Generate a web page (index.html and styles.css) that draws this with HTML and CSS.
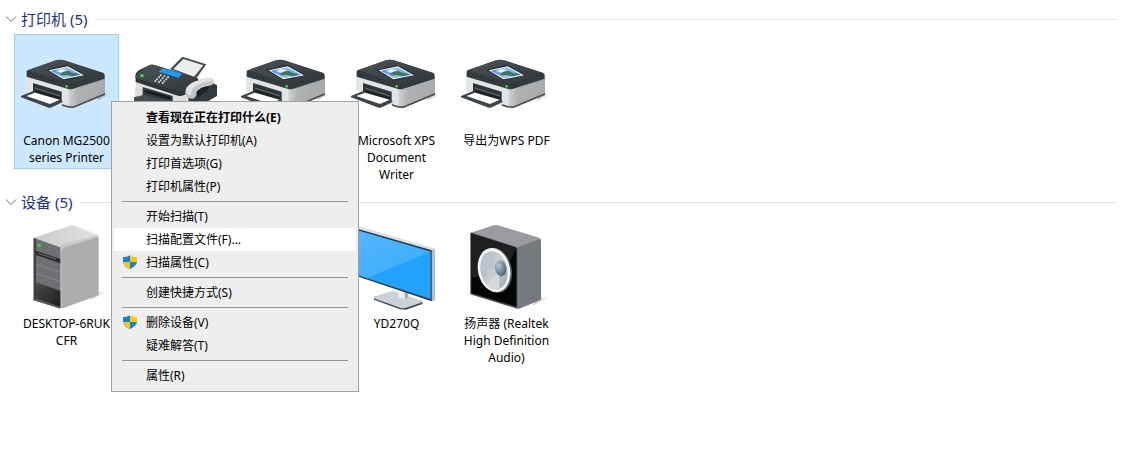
FILE: index.html
```
<!DOCTYPE html>
<html lang="zh-CN">
<head>
    <meta charset="UTF-8">
    <title>设备和打印机</title>
    <link rel="stylesheet" href="styles.css">
</head>
<body>
    <!-- shared icons -->
    <svg class="defs" aria-hidden="true">
        <defs>
            <linearGradient id="side" x1="0" x2="1">
                <stop offset="0" stop-color="#cfd0d1"/>
                <stop offset=".25" stop-color="#b0b1b3"/>
                <stop offset="1" stop-color="#a8a9ab"/>
            </linearGradient>
            <linearGradient id="lid" x1="0" y1="0" x2="1" y2="1">
                <stop offset="0" stop-color="#4a5358"/>
                <stop offset="1" stop-color="#31383c"/>
            </linearGradient>
            <linearGradient id="sky" x1="0" y1="0" x2="1" y2="0">
                <stop offset="0" stop-color="#3f82e6"/>
                <stop offset=".4" stop-color="#8fc2f7"/>
                <stop offset="1" stop-color="#5c9fe0"/>
            </linearGradient>
            <linearGradient id="shadow" x1="0" x2="1">
                <stop offset="0" stop-color="#000" stop-opacity=".22"/>
                <stop offset="1" stop-color="#000" stop-opacity="0"/>
            </linearGradient>
        </defs>
        <symbol id="printer" viewBox="45 105 309 288">
            <path d="M300 278L332 281L316 291L290 302Z" fill="url(#shadow)"/>
            <path d="M78 222L212 262V322L196 322L78 272Z" fill="#e3e4e6"/>
            <path d="M210 262L315 232V282L226 322Q216 325 206 322V264Z" fill="url(#side)"/>
            <path d="M315 279V285L222 323Q208 326 186 317V312Q208 321 222 318Z" fill="#4b5155"/>
            <path d="M99 249L185 275V305L99 278Z" fill="#30373b"/>
            <path d="M105 260L180 283V302L105 279Z" fill="#1d2225"/>
            <path d="M105 262L180 285V290L105 267Z" fill="#596165"/>
            <path d="M63 288L98 274L187 302V307L152 323H146L63 292Z" fill="#3d4549"/>
            <path d="M79 288L105 278L179 299L150 312Z" fill="#fff"/>
            <path d="M80 212L168 181Q180 177 192 181L310 219Q314 221 314 226V236L220 266Q211 269 202 266L80 230Z" fill="#333a3e"/>
            <path d="M84 210L169 181Q180 178 191 181L309 219L220 249Q211 252 202 249Z" fill="url(#lid)"/>
            <path d="M138 209L200 194L258 225L192 242Z" fill="#272d31"/>
            <path d="M146 211L203 199L252 226L190 238Z" fill="#fff"/>
            <path d="M152 212L201 202L245 225L190 234Z" fill="url(#sky)"/>
            <path d="M168 213L184 207L200 210L186 218Z" fill="#e4f2fd"/>
            <path d="M178 222Q192 212 206 213Q220 222 240 222L226 227L196 231Z" fill="#45705a"/>
            <path d="M180 228L196 225L224 229L190 234Z" fill="#8fc0e6"/>
            <circle cx="200" cy="259" r="4" fill="#2fe63a"/>
        </symbol>
    </svg>

    <section class="group">
        <header class="group-header">
            <button class="toggle" type="button" aria-label="折叠打印机">
                <svg class="chevron" viewBox="0 0 12 8"><path d="M1 1.500L6 6.500L11 1.500"/></svg>
            </button>
            <h2>打印机 (5)</h2>
        </header>
        <ul class="tiles">
            <li class="tile selected">
                <svg class="icon"><use href="#printer"/></svg>
                <span class="name">Canon MG2500 series Printer</span>
            </li>
            <li class="tile">
                <svg class="icon" viewBox="375 105 309 288">
                    <path d="M547 170L619 193L588 236L510 208Z" fill="#444c50"/>
                    <path d="M550 177L610 196L582 230L520 207Z" fill="#eceded"/>
                    <path d="M408 238L540 280L562 292V318H402Z" fill="#dddee0"/>
                    <path d="M428 261L518 288V312L402 302V294L428 290Z" fill="#31383c"/>
                    <path d="M434 269L512 291V299L434 277Z" fill="#171b1e"/>
                    <path d="M402 292L430 285L512 302L490 315H430L402 304Z" fill="#464e52"/>
                    <path d="M406 226Q408 214 424 207L449 195Q456 192 464 195L590 234Q598 237 594 243L560 280Q552 291 534 287L407 246Z" fill="#2e3539"/>
                    <path d="M410 222L449 196Q456 193 464 196L590 236L553 270Q545 277 532 273L408 235Z" fill="url(#lid)"/>
                    <path d="M488 205L547 221L535 233L476 215Z" fill="#1b9cf2"/>
                    <g fill="#d9dcde">
                        <circle cx="482" cy="226" r="3"/><circle cx="493" cy="229" r="3"/><circle cx="504" cy="232" r="3"/>
                        <circle cx="477" cy="232" r="3"/><circle cx="488" cy="235" r="3"/><circle cx="499" cy="238" r="3"/>
                        <circle cx="471" cy="238" r="3"/><circle cx="482" cy="241" r="3"/><circle cx="493" cy="244" r="3"/>
                        <circle cx="466" cy="243" r="3"/><circle cx="477" cy="246" r="3"/><circle cx="488" cy="249" r="3"/>
                    </g>
                    <circle cx="426" cy="227" r="5" fill="#35e33b"/>
                    <path d="M565 290L640 250L651 256V288L610 312H565Z" fill="#343b3f"/>
                    <path d="M588 276Q602 258 630 257L620 274L594 291Z" fill="#1d2225"/>
                    <path d="M556 276Q556 258 580 246Q606 234 632 235Q642 238 641 250Q638 258 627 256Q600 258 589 274Q592 290 580 296Q564 297 556 287Z" fill="#c3c4c6"/>
                    <path d="M557 274Q560 257 584 245Q608 235 631 236L637 243Q600 246 581 262Q573 270 574 285Q562 284 557 274Z" fill="#e5e5e6"/>
                </svg>
            </li>
            <li class="tile">
                <svg class="icon"><use href="#printer"/></svg>
            </li>
            <li class="tile">
                <svg class="icon"><use href="#printer"/></svg>
                <span class="name">Microsoft XPS Document Writer</span>
            </li>
            <li class="tile">
                <svg class="icon"><use href="#printer"/></svg>
                <span class="name">导出为WPS PDF</span>
            </li>
        </ul>
    </section>

    <section class="group">
        <header class="group-header">
            <button class="toggle" type="button" aria-label="折叠设备">
                <svg class="chevron" viewBox="0 0 12 8"><path d="M1 1.500L6 6.500L11 1.500"/></svg>
            </button>
            <h2>设备 (5)</h2>
        </header>
        <ul class="tiles">
            <li class="tile">
                <!-- tower -->
                <svg class="icon" viewBox="45 99 309 288">
                    <defs>
                        <linearGradient id="towerTop" x1="0" x2="1">
                            <stop offset="0" stop-color="#c9cacc"/>
                            <stop offset="1" stop-color="#e2e3e5"/>
                        </linearGradient>
                        <linearGradient id="towerBase" x1="0" y1="0" x2="1" y2="1">
                            <stop offset="0" stop-color="#4b4b4d"/>
                            <stop offset="1" stop-color="#1c1c1d"/>
                        </linearGradient>
                    </defs>
                    <path d="M290 318L320 323L296 332L270 345Z" fill="url(#shadow)"/>
                    <path d="M102 158L210 122Q217 119 224 122L290 148Q295 150 292 155L183 188Z" fill="url(#towerTop)"/>
                    <path d="M180 192Q182 182 194 178L288 152Q296 150 296 160V331L188 370L180 368Z" fill="#acadaf"/>
                    <path d="M180 192Q182 182 194 178L288 152Q294 151 295 156L196 186Q186 190 184 200V369L180 368Z" fill="#c9cacc"/>
                    <path d="M101 158L181 187V370L101 345Z" fill="#707074"/>
                    <path d="M101 158L108 161V347L101 344Z" fill="#414144"/>
                    <path d="M108 197L181 222V235L108 210Z" fill="#2a2a2c"/>
                    <path d="M114 205L168 222" stroke="#6d6d70" stroke-width="3"/>
                    <path d="M108 238L181 262M108 265L181 289" stroke="#929296" stroke-width="2"/>
                    <path d="M108 292L181 317V366L108 341Z" fill="url(#towerBase)"/>
                    <path d="M101 341L181 366V371L101 346Z" fill="#55565a"/>
                    <circle cx="118" cy="181" r="5" fill="#24e62c"/>
                </svg>
                <span class="name hostname">DESKTOP-6RUKCFR</span>
            </li>
            <li class="tile"></li>
            <li class="tile"></li>
            <li class="tile">
                <!-- monitor -->
                <svg class="icon" viewBox="-15 9 309 288">
                    <defs>
                        <linearGradient id="screen" x1="0" y1="0" x2="1" y2="1">
                            <stop offset="0" stop-color="#55b7fd"/>
                            <stop offset="1" stop-color="#3aacfd"/>
                        </linearGradient>
                    </defs>
                    <path d="M72 246L126 230L217 259V267L168 284L150 283L72 254Z" fill="#3d484f"/>
                    <path d="M72 246L124 229Q130 228 136 230L215 257Q219 260 213 263L168 278Q158 281 150 278L75 251Q70 249 72 246Z" fill="#cbd2d7"/>
                    <path d="M145 220L175 230V250L164 253L145 246Z" fill="#eceff1"/>
                    <path d="M164 228H175V249L164 253Z" fill="#a7afb5"/>
                    <path d="M-10 24L0 27L255 102V256L245 259Z" fill="#b5bec4"/>
                    <path d="M-10 25L0 27L254 102L245 106L-10 32Z" fill="#dae0e3"/>
                    <path d="M-10 32L245 106V259L-10 173Z" fill="#263742"/>
                    <path d="M-10 37L242 110V252L-10 170Z" fill="#22a2fd"/>
                    <path d="M-10 37L242 110L52 188L-10 168Z" fill="url(#screen)"/>
                </svg>
                <span class="name">YD270Q</span>
            </li>
            <li class="tile">
                <!-- speaker -->
                <svg class="icon" viewBox="315 9 309 288">
                    <defs>
                        <linearGradient id="cone" x1="0" y1="0" x2="1" y2="1">
                            <stop offset="0" stop-color="#a5adb2"/>
                            <stop offset=".5" stop-color="#c9d0d4"/>
                            <stop offset="1" stop-color="#98a1a7"/>
                        </linearGradient>
                        <radialGradient id="dome" cx=".35" cy=".3" r=".8">
                            <stop offset="0" stop-color="#b6c7d2"/>
                            <stop offset="1" stop-color="#465968"/>
                        </radialGradient>
                    </defs>
                    <path d="M566 244L598 250L572 260L545 274Z" fill="url(#shadow)"/>
                    <path d="M361 54L430 31Q437 29 444 31L568 68Q573 70 571 76L502 100Z" fill="#9a9ca1"/>
                    <path d="M499 98L568 73Q573 72 573 78V254L508 281L499 280Z" fill="#777981"/>
                    <path d="M361 54Q362 51 368 54L496 95Q502 98 502 104V281L361 238Z" fill="#44464b"/>
                    <path d="M364 56L499 99V275L364 234Z" fill="#050505"/>
                    <path d="M364 56L499 99L470 160L364 190Z" fill="#1f1f20"/>
                    <ellipse cx="437" cy="166" rx="48" ry="68" transform="rotate(-12 437 166)" fill="#5f6467"/>
                    <ellipse cx="432" cy="165" rx="48" ry="67" transform="rotate(-12 432 165)" fill="#f2f3f3"/>
                    <ellipse cx="432" cy="166" rx="40" ry="58" transform="rotate(-12 432 166)" fill="url(#cone)"/>
                    <path d="M447 157L406 114Q388 135 395 168Z" fill="#bac4cb"/>
                    <path d="M447 165L408 208Q424 228 448 220Z" fill="#d3d9dc"/>
                    <ellipse cx="452" cy="160" rx="17" ry="24" transform="rotate(-10 452 160)" fill="url(#dome)"/>
                </svg>
                <span class="name">扬声器 (Realtek High Definition Audio)</span>
            </li>
        </ul>
    </section>

    <menu class="context-menu">
        <li><button type="button" class="default">查看现在正在打印什么(E)</button></li>
        <li><button type="button">设置为默认打印机(A)</button></li>
        <li><button type="button">打印首选项(G)</button></li>
        <li><button type="button">打印机属性(P)</button></li>
        <li class="separator" role="separator"></li>
        <li><button type="button">开始扫描(T)</button></li>
        <li><button type="button" class="active">扫描配置文件(F)...</button></li>
        <li>
            <button type="button">
                <svg class="shield" viewBox="0 0 14 14">
                    <path d="M7 0Q5 2 0 2V6Q0 11 7 14Z" fill="#1683d0"/>
                    <path d="M7 0Q9 2 14 2V6Q14 11 7 14Z" fill="#fcc70f"/>
                    <path d="M0 7H7V14Q1 11 0 7Z" fill="#fcc70f"/>
                    <path d="M14 7H7V14Q13 11 14 7Z" fill="#1683d0"/>
                </svg>
                扫描属性(C)
            </button>
        </li>
        <li class="separator" role="separator"></li>
        <li><button type="button">创建快捷方式(S)</button></li>
        <li class="separator" role="separator"></li>
        <li>
            <button type="button">
                <svg class="shield" viewBox="0 0 14 14">
                    <path d="M7 0Q5 2 0 2V6Q0 11 7 14Z" fill="#1683d0"/>
                    <path d="M7 0Q9 2 14 2V6Q14 11 7 14Z" fill="#fcc70f"/>
                    <path d="M0 7H7V14Q1 11 0 7Z" fill="#fcc70f"/>
                    <path d="M14 7H7V14Q13 11 14 7Z" fill="#1683d0"/>
                </svg>
                删除设备(V)
            </button>
        </li>
        <li><button type="button">疑难解答(T)</button></li>
        <li class="separator" role="separator"></li>
        <li><button type="button">属性(R)</button></li>
    </menu>
</body>
</html>
```
FILE: styles.css
```
* {
    box-sizing: border-box;
}

body {
    margin: 0;
    padding: 4px 7px 0 5px;
    background-color: #fff;
    color: #000;
    font-family: 'Noto Sans', 'Noto Sans CJK SC', sans-serif;
    font-size: 12px;
    line-height: 17px;
}

ul,
menu {
    list-style: none;
    margin: 0;
    padding: 0;
}

.defs {
    position: absolute;
    width: 0;
    height: 0;
}

/* groups */
.group {
    margin-bottom: 1px;
}

.group-header {
    display: flex;
    align-items: center;
    height: 30px;
}

.group-header::after {
    content: "";
    flex: 1;
    height: 1px;
    margin-left: 8px;
    background-color: #e2e2e2;
}

.group-header h2 {
    margin: 0;
    color: #1e3287;
    font-size: 15px;
    font-weight: normal;
    line-height: 20px;
}

.toggle {
    display: flex;
    width: 16px;
    padding: 0;
    border: none;
    background: none;
}

.chevron {
    width: 12px;
    height: 8px;
    fill: none;
    stroke: #6b6b6b;
}

.tiles {
    display: grid;
    grid-template-columns: repeat(auto-fill, 105px);
    align-items: start;
    gap: 5px;
    padding-left: 9px;
}

.tile {
    display: flex;
    flex-direction: column;
    gap: 1px;
    padding-bottom: 2px;
    border: 1px solid transparent;
    text-align: center;
}

.tile.selected {
    background-color: #cce8ff;
    border-color: #99d1ff;
}

.icon {
    width: 100%;
    height: 96px;
}

.name {
    padding: 0 4px;
}

.hostname {
    padding: 0 5px;
    word-break: break-all;
}

/* context menu */
.context-menu {
    position: absolute;
    top: 101px;
    left: 111px;
    width: 248px;
    padding: 4px 2px;
    background-color: #eee;
    border: 1px solid #a0a0a0;
}

.context-menu button {
    display: block;
    position: relative;
    width: 100%;
    height: 23px;
    padding: 0 0 0 32px;
    border: none;
    background: none;
    color: #000;
    font: inherit;
    text-align: left;
}

.context-menu .default {
    font-weight: bold;
}

.context-menu .active,
.context-menu button:hover {
    background-color: #fff;
}

.shield {
    position: absolute;
    top: 4px;
    left: 9px;
    width: 14px;
    height: 14px;
}

.separator {
    height: 1px;
    margin: 3px 8px;
    background-color: #919191;
}
```
